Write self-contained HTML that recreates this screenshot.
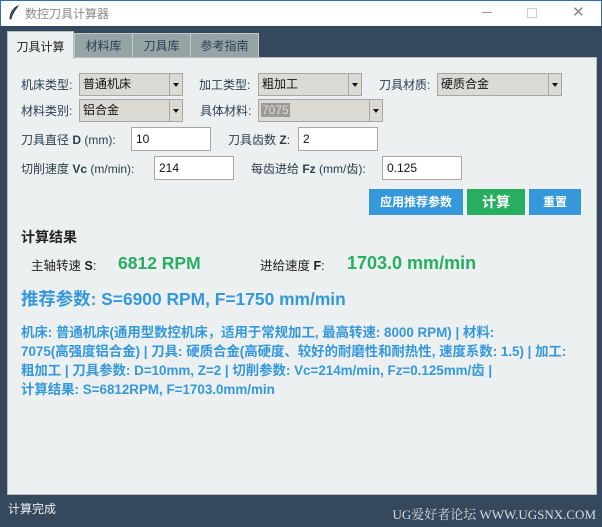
<!DOCTYPE html>
<html><head><meta charset="utf-8"><style>
*{margin:0;padding:0;box-sizing:border-box}
body{width:602px;height:527px;overflow:hidden;background:#34495e;font-family:"Liberation Sans","Noto Sans CJK SC",sans-serif;font-size:12px;position:relative;color:#222}
.a{position:absolute;white-space:nowrap}
#title{left:0;top:0;width:602px;height:26px;background:#fff;border:1px solid #2f6fae;border-bottom:none}
.tab{position:absolute;top:33px;height:25px;background:#95a5a6;border:1px solid #c8c8c8;border-bottom:none;font-size:12px;color:#2c3e50;text-align:center;line-height:24px}
#panel{left:7px;top:57px;width:590px;height:438px;background:#ecf0f1;border:1px solid #bbb}
.lbl{font-size:12px;color:#2c3e50}
.cb{position:absolute;height:23px;background:#dcdad5;border:1px solid #a8a6a2;font-size:12px;line-height:21px;padding-left:3px;color:#111}
.cb .ar{position:absolute;right:0;top:0;width:13px;height:21px;border-left:1px solid #a8a6a2;background:#dcdad5}
.cb .ar:after{content:"";position:absolute;left:3px;top:9px;border-left:3.5px solid transparent;border-right:3.5px solid transparent;border-top:4px solid #111}
.en{position:absolute;height:24px;background:#fff;border:1px solid #a8a6a2;font-size:12px;line-height:22px;padding-left:4px;color:#111}
.btn{position:absolute;top:189px;height:26px;color:#fff;font-weight:bold;text-align:center;line-height:26px;font-size:12px}
.info{left:21px;font-size:13.4px;font-weight:bold;color:#3498db}
</style></head><body>
<div class="a" id="title"></div>
<svg class="a" style="left:8px;top:5px" width="12" height="16" viewBox="0 0 12 16"><path d="M10 1 C5 3 2 8 2 14 L3 14 C4 9 7 5 10 1Z" fill="#3a6aa0" stroke="#222" stroke-width="0.8"/></svg>
<div class="a" style="left:25px;top:5px;font-size:12px;color:#888">数控刀具计算器</div>
<div class="a" style="left:482px;top:12px;width:10px;height:1px;background:#999"></div>
<div class="a" style="left:527px;top:8px;width:10px;height:10px;border:1px solid #ccc"></div>
<div class="a" style="left:572px;top:6px;font-size:15px;color:#888;line-height:14px">✕</div>

<div class="tab" style="left:74px;width:59px">材料库</div>
<div class="tab" style="left:132px;width:59px">刀具库</div>
<div class="tab" style="left:190px;width:69px">参考指南</div>
<div class="a" id="panel"></div>
<div class="tab" style="left:7px;top:31px;width:67px;height:28px;background:#ecf0f1;border-color:#bbb;line-height:30px;color:#222">刀具计算</div>

<div class="a lbl" style="left:21px;top:76px">机床类型:</div>
<div class="cb" style="left:79px;top:73px;width:104px">普通机床<div class="ar"></div></div>
<div class="a lbl" style="left:199px;top:76px">加工类型:</div>
<div class="cb" style="left:258px;top:73px;width:104px">粗加工<div class="ar"></div></div>
<div class="a lbl" style="left:379px;top:76px">刀具材质:</div>
<div class="cb" style="left:437px;top:73px;width:125px">硬质合金<div class="ar"></div></div>

<div class="a lbl" style="left:21px;top:102px">材料类别:</div>
<div class="cb" style="left:79px;top:99px;width:104px">铝合金<div class="ar"></div></div>
<div class="a lbl" style="left:200px;top:102px">具体材料:</div>
<div class="cb" style="left:258px;top:99px;width:125px;padding-left:2px"><span style="background:#9c9a95;color:#ddd;padding:0 1px">7075</span><div class="ar"></div></div>

<div class="a lbl" style="left:21px;top:131px">刀具直径 <b>D</b> (mm):</div>
<div class="en" style="left:131px;top:127px;width:80px">10</div>
<div class="a lbl" style="left:228px;top:131px">刀具齿数 <b>Z</b>:</div>
<div class="en" style="left:298px;top:127px;width:80px">2</div>

<div class="a lbl" style="left:21px;top:160px">切削速度 <b>Vc</b> (m/min):</div>
<div class="en" style="left:154px;top:156px;width:80px">214</div>
<div class="a lbl" style="left:251px;top:160px">每齿进给 <b>Fz</b> (mm/齿):</div>
<div class="en" style="left:382px;top:156px;width:80px">0.125</div>

<div class="btn" style="left:369px;width:94px;background:#3498db">应用推荐参数</div>
<div class="btn" style="left:467px;width:58px;background:#27ae60;font-size:14px">计算</div>
<div class="btn" style="left:529px;width:52px;background:#3498db">重置</div>

<div class="a" style="left:21px;top:227px;font-size:14px;font-weight:bold;color:#222">计算结果</div>
<div class="a" style="left:31px;top:255px;font-size:12.5px;color:#222">主轴转速 <b>S</b>:</div>
<div class="a" style="left:118px;top:253px;font-size:17.5px;font-weight:bold;color:#27ae60">6812 RPM</div>
<div class="a" style="left:260px;top:255px;font-size:12.5px;color:#222">进给速度 <b>F</b>:</div>
<div class="a" style="left:347px;top:253px;font-size:18px;font-weight:bold;color:#27ae60">1703.0 mm/min</div>
<div class="a" style="left:21px;top:286px;font-size:17.4px;font-weight:bold;color:#3498db">推荐参数: S=6900 RPM, F=1750 mm/min</div>

<div class="a info" style="top:321px">机床: 普通机床(通用型数控机床，适用于常规加工, 最高转速: 8000 RPM) | 材料:</div>
<div class="a info" style="top:340px">7075(高强度铝合金) | 刀具: 硬质合金(高硬度、较好的耐磨性和耐热性, 速度系数: 1.5) | 加工:</div>
<div class="a info" style="top:359px">粗加工 | 刀具参数: D=10mm, Z=2 | 切削参数: Vc=214m/min, Fz=0.125mm/齿 |</div>
<div class="a info" style="top:378px">计算结果: S=6812RPM, F=1703.0mm/min</div>

<div class="a" style="left:8px;top:500px;font-size:12px;color:#eee">计算完成</div>
<div class="a" style="right:6px;top:504px;font-size:13px;color:#ddd;font-family:'Liberation Serif','Noto Serif CJK SC',serif">UG爱好者论坛 WWW.UGSNX.COM</div>
</body></html>
